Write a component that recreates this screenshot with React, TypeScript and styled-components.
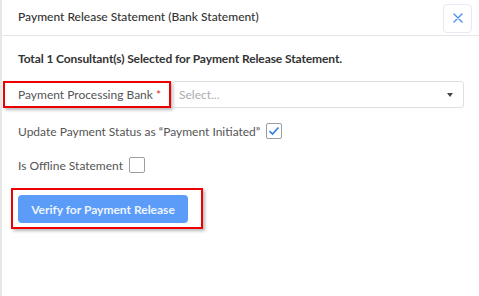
import React from "react";
import styled, { createGlobalStyle } from "styled-components";

const Global = createGlobalStyle`
  html, body { margin: 0; padding: 0; background: #fff; }
  body { font-family: "Lato", "Open Sans", sans-serif; }
`;

const Page = styled.div`
  width: 479px;
  height: 296px;
  display: flex;
  background: #fff;
`;

const Gutter = styled.div`
  width: 2px;
  background: #e6e8e6;
  flex: none;
`;

const Modal = styled.div`
  flex: 1;
  display: flex;
  flex-direction: column;
  background: #fff;
`;

const Header = styled.div`
  height: 36px;
  box-sizing: border-box;
  display: flex;
  align-items: center;
  justify-content: space-between;
  padding: 0 7px 3px 16px;
  border-bottom: 1px solid #e4e6e8;
`;

const Title = styled.div`
  font-size: 12px;
  color: #333;
  font-weight: 500;
`;

const CloseButton = styled.button`
  width: 29px;
  height: 29px;
  margin-top: 4px;
  border: 1px solid #e6eaf2;
  border-radius: 4px;
  background: #fff;
  display: flex;
  align-items: center;
  justify-content: center;
  padding: 0;
`;

const Body = styled.div`
  padding: 15px 15px 0 16px;
  display: flex;
  flex-direction: column;
`;

const Summary = styled.div`
  font-size: 12px;
  font-weight: 700;
  letter-spacing: -0.1px;
  color: #333;
  line-height: 16px;
`;

const FieldRow = styled.div`
  display: flex;
  align-items: stretch;
  margin-top: 14px;
  margin-left: -15px;
`;

const Annotated = styled.div<{ $pad: string }>`
  border: 2px solid #ee0000;
  box-shadow: 2px 2px 3px rgba(0, 0, 0, 0.28);
  padding: ${(p) => p.$pad};
  display: flex;
  align-items: center;
`;

const Label = styled.span`
  font-size: 12px;
  color: #555;
`;

const Required = styled.span`
  color: #e03030;
  margin-left: 3px;
`;

const Select = styled.div`
  flex: 1;
  height: 27px;
  box-sizing: border-box;
  border: 1px solid #dcdfe3;
  border-radius: 3px;
  margin-left: 1px;
  display: flex;
  align-items: center;
  justify-content: space-between;
  padding: 0 10px 0 6px;
  font-size: 12px;
  color: #a9adb2;
`;

const Caret = styled.span`
  width: 0;
  height: 0;
  border-left: 3.5px solid transparent;
  border-right: 3.5px solid transparent;
  border-top: 4px solid #444;
`;

const CheckRow = styled.div<{ $top: number }>`
  display: flex;
  align-items: center;
  gap: 6px;
  margin-top: ${(p) => p.$top}px;
`;

const Box = styled.span`
  width: 16px;
  height: 16px;
  box-sizing: border-box;
  border: 1px solid #9a9ea3;
  border-radius: 2px;
  display: flex;
  align-items: center;
  justify-content: center;
  background: #fff;
`;

const ButtonArea = styled.div`
  margin-top: 15px;
  margin-left: -7px;
  align-self: flex-start;
`;

const PrimaryButton = styled.button`
  width: 170px;
  height: 28px;
  border: none;
  border-radius: 4px;
  background: #5b9cf8;
  color: #eef4ff;
  font-family: "Lato", sans-serif;
  font-size: 12px;
  font-weight: 700;
  padding: 0;
`;

export default function App() {
  return (
    <>
      <Global />
      <Page>
        <Gutter />
        <Modal>
          <Header>
            <Title>Payment Release Statement (Bank Statement)</Title>
            <CloseButton aria-label="close">
              <svg width="10" height="10" viewBox="0 0 10 10">
                <path d="M1 1L9 9M9 1L1 9" stroke="#4c8ef5" strokeWidth="1.4" strokeLinecap="round" />
              </svg>
            </CloseButton>
          </Header>
          <Body>
            <Summary>Total 1 Consultant(s) Selected for Payment Release Statement.</Summary>
            <FieldRow>
              <Annotated $pad="0 8px 0 13px">
                <Label>
                  Payment Processing Bank<Required>*</Required>
                </Label>
              </Annotated>
              <Select>
                <span>Select...</span>
                <Caret />
              </Select>
            </FieldRow>
            <CheckRow $top={15}>
              <Label>Update Payment Status as “Payment Initiated”</Label>
              <Box>
                <svg width="12" height="10" viewBox="0 0 12 10">
                  <path d="M1.5 5.2L4.5 8L10.5 1.5" fill="none" stroke="#2f7de1" strokeWidth="1.6" />
                </svg>
              </Box>
            </CheckRow>
            <CheckRow $top={18}>
              <Label>Is Offline Statement</Label>
              <Box />
            </CheckRow>
            <ButtonArea>
              <Annotated $pad="5px 13px 4px 5px">
                <PrimaryButton>Verify for Payment Release</PrimaryButton>
              </Annotated>
            </ButtonArea>
          </Body>
        </Modal>
      </Page>
    </>
  );
}
